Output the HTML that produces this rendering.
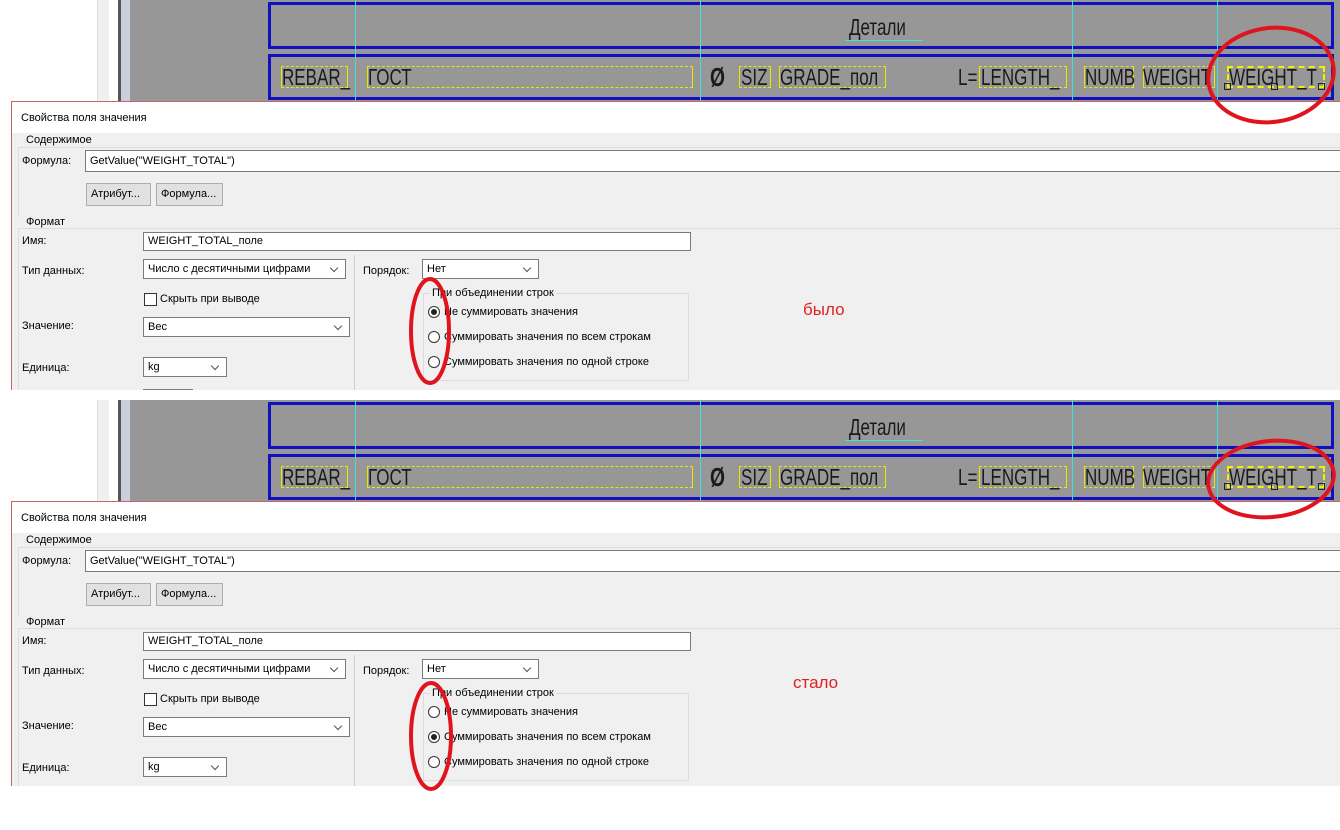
<!DOCTYPE html>
<html><head><meta charset="utf-8">
<style>
*{margin:0;padding:0;box-sizing:border-box}
html{overflow:hidden;width:1340px;height:830px}
body{width:1340px;height:830px;background:#fff;position:relative;overflow:hidden;font-family:"Liberation Sans","Noto Sans CJK SC",sans-serif;font-size:11px;color:#000}
.panel{position:absolute;left:0;width:1340px;overflow:hidden}
.a{position:absolute}
.canvas{left:130px;top:0;width:1210px;height:100%;background:#979797}
.strip1{left:97px;top:0;width:12px;height:100%;background:#f0f0f0;border-left:1px solid #ddd}
.strip2{left:118px;top:0;width:3px;height:100%;background:#555}
.strip3{left:121px;top:0;width:9px;height:100%;background:#c8d0dc}
.brect{border:3px solid #1010c0}
.cy{width:1px;background:#3fe0e0}
.dt{font-family:"Liberation Sans Narrow","Liberation Sans",sans-serif;font-size:23px;color:#1a1a1a;transform:scaleX(.74);transform-origin:left top;white-space:nowrap}
.yb{border:1px dashed #e8e800;border-left-style:solid;border-right-style:solid}
.dlg{left:11px;top:101px;width:1340px;height:300px;background:#f0f0f0;border-left:1px solid #c86464;border-top:1px solid #c86464;overflow:hidden}
.tb{left:0;top:0;width:100%;height:31px;background:#fff}
.inp,.sel{background:#fff;border:1px solid #7a7a7a;height:20px;padding:0 4px;line-height:18px;font-size:11px}
.sel:after{content:"";position:absolute;right:8px;top:5px;width:5px;height:5px;border-right:1px solid #555;border-bottom:1px solid #555;transform:rotate(45deg)}
.btn{background:#e1e1e1;border:1px solid #adadad;height:23px;padding:0 4px;line-height:21px;font-size:11px}
.grp{border:1px solid #dcdcdc}
.gl{background:#f0f0f0;padding:0 2px;font-size:11px}
.rad{width:12px;height:12px;border:1px solid #333;border-radius:50%;background:#fff}
.rad.on:after{content:"";position:absolute;left:2px;top:2px;width:6px;height:6px;border-radius:50%;background:#222}
.chk{width:13px;height:13px;border:1px solid #333;background:#fff}
.red{color:#e02020;font-size:17px}
</style></head><body>

<!-- TOP PANEL -->
<div class="panel" style="top:0;height:390px">
 <div class="a strip1"></div><div class="a strip2"></div><div class="a strip3"></div>
 <div class="a canvas"></div>
 <div class="a brect" style="left:268px;top:2px;width:1066px;height:47px"></div>
 <div class="a brect" style="left:268px;top:54px;width:1066px;height:46px"></div>
 <div class="a cy" style="left:355px;top:0;height:100px"></div>
 <div class="a cy" style="left:700px;top:0;height:100px"></div>
 <div class="a cy" style="left:1072px;top:0;height:100px"></div>
 <div class="a cy" style="left:1217px;top:0;height:100px"></div>
 <div class="a dt" style="left:849px;top:14px">Детали</div>
 <div class="a" style="left:845px;top:40px;width:78px;height:1px;background:#3fe0e0"></div>
 <div class="a yb" style="left:281px;top:66px;width:67px;height:22px"></div>
 <div class="a yb" style="left:367px;top:66px;width:326px;height:22px"></div>
 <div class="a yb" style="left:739px;top:66px;width:32px;height:22px"></div>
 <div class="a yb" style="left:779px;top:66px;width:107px;height:22px"></div>
 <div class="a yb" style="left:979px;top:66px;width:88px;height:22px"></div>
 <div class="a yb" style="left:1084px;top:66px;width:50px;height:22px"></div>
 <div class="a yb" style="left:1143px;top:66px;width:72px;height:22px"></div>
 <div class="a yb" style="left:1227px;top:66px;width:98px;height:22px;border:2px dashed #f0f000"></div>
 <div class="a dt" style="left:282px;top:64px">REBAR_</div>
 <div class="a dt" style="left:368px;top:64px">ГОСТ</div>
 <div class="a dt" style="left:710px;top:62px;font-size:26px;font-weight:bold">Ø</div>
 <div class="a dt" style="left:741px;top:64px">SIZ</div>
 <div class="a dt" style="left:780px;top:64px">GRADE_пол</div>
 <div class="a dt" style="left:958px;top:64px">L=</div>
 <div class="a dt" style="left:981px;top:64px">LENGTH_</div>
 <div class="a dt" style="left:1085px;top:64px">NUMB</div>
 <div class="a dt" style="left:1143px;top:64px">WEIGHT</div>
 <div class="a dt" style="left:1229px;top:64px">WEIGHT_T</div>
 <div class="a" style="left:1224px;top:83px;width:7px;height:7px;border:1px solid #222"></div>
 <div class="a" style="left:1271px;top:83px;width:7px;height:7px;border:1px solid #222"></div>
 <div class="a" style="left:1318px;top:83px;width:7px;height:7px;border:1px solid #222"></div>

 <div class="a dlg">
  <div class="a tb"></div>
  <div class="a" style="left:9px;top:10px">Свойства поля значения</div>
  <div class="a grp" style="left:6px;top:45px;width:1330px;height:70px;border-bottom:none;border-right:none"></div>
  <div class="a gl" style="left:12px;top:32px">Содержимое</div>
  <div class="a" style="left:10px;top:53px">Формула:</div>
  <div class="a inp" style="left:73px;top:48px;width:1270px;height:22px;line-height:20px">GetValue("WEIGHT_TOTAL")</div>
  <div class="a btn" style="left:74px;top:81px;width:65px">Атрибут...</div>
  <div class="a btn" style="left:144px;top:81px;width:67px">Формула...</div>
  <div class="a grp" style="left:6px;top:126px;width:1330px;height:300px;border-right:none"></div>
  <div class="a gl" style="left:12px;top:114px">Формат</div>
  <div class="a" style="left:10px;top:133px">Имя:</div>
  <div class="a inp" style="left:131px;top:130px;width:548px;height:19px;line-height:17px">WEIGHT_TOTAL_поле</div>
  <div class="a" style="left:10px;top:163px">Тип данных:</div>
  <div class="a sel" style="left:131px;top:157px;width:203px">Число с десятичными цифрами</div>
  <div class="a" style="left:342px;top:153px;width:1px;height:260px;background:#d0d0d0"></div>
  <div class="a" style="left:351px;top:163px">Порядок:</div>
  <div class="a sel" style="left:410px;top:157px;width:117px">Нет</div>
  <div class="a chk" style="left:132px;top:191px"></div>
  <div class="a" style="left:148px;top:191px">Скрыть при выводе</div>
  <div class="a" style="left:10px;top:218px">Значение:</div>
  <div class="a sel" style="left:131px;top:215px;width:207px">Вес</div>
  <div class="a" style="left:10px;top:260px">Единица:</div>
  <div class="a sel" style="left:131px;top:255px;width:84px">kg</div>
  <div class="a inp" style="left:131px;top:287px;width:50px"></div>
  <div class="a inp" style="left:410px;top:288px;width:136px"></div>
  <div class="a grp" style="left:411px;top:191px;width:266px;height:88px"></div>
  <div class="a gl" style="left:418px;top:185px">При объединении строк</div>
  <div class="a rad on" style="left:416px;top:204px"></div>
  <div class="a" style="left:432px;top:204px">Не суммировать значения</div>
  <div class="a rad" style="left:416px;top:229px"></div>
  <div class="a" style="left:432px;top:229px">Суммировать значения по всем строкам</div>
  <div class="a rad" style="left:416px;top:254px"></div>
  <div class="a" style="left:432px;top:254px">Суммировать значения по одной строке</div>
 </div>
 <div class="a red" style="left:803px;top:300px">было</div>
 <svg class="a" style="left:0;top:0" width="1340" height="390">
  <ellipse cx="1271" cy="75" rx="63" ry="47" fill="none" stroke="#e0141e" stroke-width="4" transform="rotate(-8 1271 75)"/>
  <ellipse cx="430" cy="331" rx="19" ry="52" fill="none" stroke="#e0141e" stroke-width="4"/>
 </svg>
</div>

<!-- BOTTOM PANEL -->
<div class="panel" style="top:400px;height:386px">
 <div class="a strip1"></div><div class="a strip2"></div><div class="a strip3"></div>
 <div class="a canvas"></div>
 <div class="a brect" style="left:268px;top:2px;width:1066px;height:47px"></div>
 <div class="a brect" style="left:268px;top:54px;width:1066px;height:46px"></div>
 <div class="a cy" style="left:355px;top:0;height:100px"></div>
 <div class="a cy" style="left:700px;top:0;height:100px"></div>
 <div class="a cy" style="left:1072px;top:0;height:100px"></div>
 <div class="a cy" style="left:1217px;top:0;height:100px"></div>
 <div class="a dt" style="left:849px;top:14px">Детали</div>
 <div class="a" style="left:845px;top:40px;width:78px;height:1px;background:#3fe0e0"></div>
 <div class="a yb" style="left:281px;top:66px;width:67px;height:22px"></div>
 <div class="a yb" style="left:367px;top:66px;width:326px;height:22px"></div>
 <div class="a yb" style="left:739px;top:66px;width:32px;height:22px"></div>
 <div class="a yb" style="left:779px;top:66px;width:107px;height:22px"></div>
 <div class="a yb" style="left:979px;top:66px;width:88px;height:22px"></div>
 <div class="a yb" style="left:1084px;top:66px;width:50px;height:22px"></div>
 <div class="a yb" style="left:1143px;top:66px;width:72px;height:22px"></div>
 <div class="a yb" style="left:1227px;top:66px;width:98px;height:22px;border:2px dashed #f0f000"></div>
 <div class="a dt" style="left:282px;top:64px">REBAR_</div>
 <div class="a dt" style="left:368px;top:64px">ГОСТ</div>
 <div class="a dt" style="left:710px;top:62px;font-size:26px;font-weight:bold">Ø</div>
 <div class="a dt" style="left:741px;top:64px">SIZ</div>
 <div class="a dt" style="left:780px;top:64px">GRADE_пол</div>
 <div class="a dt" style="left:958px;top:64px">L=</div>
 <div class="a dt" style="left:981px;top:64px">LENGTH_</div>
 <div class="a dt" style="left:1085px;top:64px">NUMB</div>
 <div class="a dt" style="left:1143px;top:64px">WEIGHT</div>
 <div class="a dt" style="left:1229px;top:64px">WEIGHT_T</div>
 <div class="a" style="left:1224px;top:83px;width:7px;height:7px;border:1px solid #222"></div>
 <div class="a" style="left:1271px;top:83px;width:7px;height:7px;border:1px solid #222"></div>
 <div class="a" style="left:1318px;top:83px;width:7px;height:7px;border:1px solid #222"></div>

 <div class="a dlg">
  <div class="a tb"></div>
  <div class="a" style="left:9px;top:10px">Свойства поля значения</div>
  <div class="a grp" style="left:6px;top:45px;width:1330px;height:70px;border-bottom:none;border-right:none"></div>
  <div class="a gl" style="left:12px;top:32px">Содержимое</div>
  <div class="a" style="left:10px;top:53px">Формула:</div>
  <div class="a inp" style="left:73px;top:48px;width:1270px;height:22px;line-height:20px">GetValue("WEIGHT_TOTAL")</div>
  <div class="a btn" style="left:74px;top:81px;width:65px">Атрибут...</div>
  <div class="a btn" style="left:144px;top:81px;width:67px">Формула...</div>
  <div class="a grp" style="left:6px;top:126px;width:1330px;height:300px;border-right:none"></div>
  <div class="a gl" style="left:12px;top:114px">Формат</div>
  <div class="a" style="left:10px;top:133px">Имя:</div>
  <div class="a inp" style="left:131px;top:130px;width:548px;height:19px;line-height:17px">WEIGHT_TOTAL_поле</div>
  <div class="a" style="left:10px;top:163px">Тип данных:</div>
  <div class="a sel" style="left:131px;top:157px;width:203px">Число с десятичными цифрами</div>
  <div class="a" style="left:342px;top:153px;width:1px;height:260px;background:#d0d0d0"></div>
  <div class="a" style="left:351px;top:163px">Порядок:</div>
  <div class="a sel" style="left:410px;top:157px;width:117px">Нет</div>
  <div class="a chk" style="left:132px;top:191px"></div>
  <div class="a" style="left:148px;top:191px">Скрыть при выводе</div>
  <div class="a" style="left:10px;top:218px">Значение:</div>
  <div class="a sel" style="left:131px;top:215px;width:207px">Вес</div>
  <div class="a" style="left:10px;top:260px">Единица:</div>
  <div class="a sel" style="left:131px;top:255px;width:84px">kg</div>
  <div class="a grp" style="left:411px;top:191px;width:266px;height:88px"></div>
  <div class="a gl" style="left:418px;top:185px">При объединении строк</div>
  <div class="a rad" style="left:416px;top:204px"></div>
  <div class="a" style="left:432px;top:204px">Не суммировать значения</div>
  <div class="a rad on" style="left:416px;top:229px"></div>
  <div class="a" style="left:432px;top:229px">Суммировать значения по всем строкам</div>
  <div class="a rad" style="left:416px;top:254px"></div>
  <div class="a" style="left:432px;top:254px">Суммировать значения по одной строке</div>
 </div>
 <div class="a red" style="left:793px;top:273px">стало</div>
 <svg class="a" style="left:0;top:0" width="1340" height="386">
  <ellipse cx="1271" cy="79" rx="63" ry="38" fill="none" stroke="#e0141e" stroke-width="4" transform="rotate(-6 1271 79)"/>
 </svg>
</div>
<svg style="position:absolute;left:0;top:0" width="1340" height="830">
 <ellipse cx="431" cy="736" rx="20" ry="53" fill="none" stroke="#e0141e" stroke-width="4"/>
</svg>
</body></html>
